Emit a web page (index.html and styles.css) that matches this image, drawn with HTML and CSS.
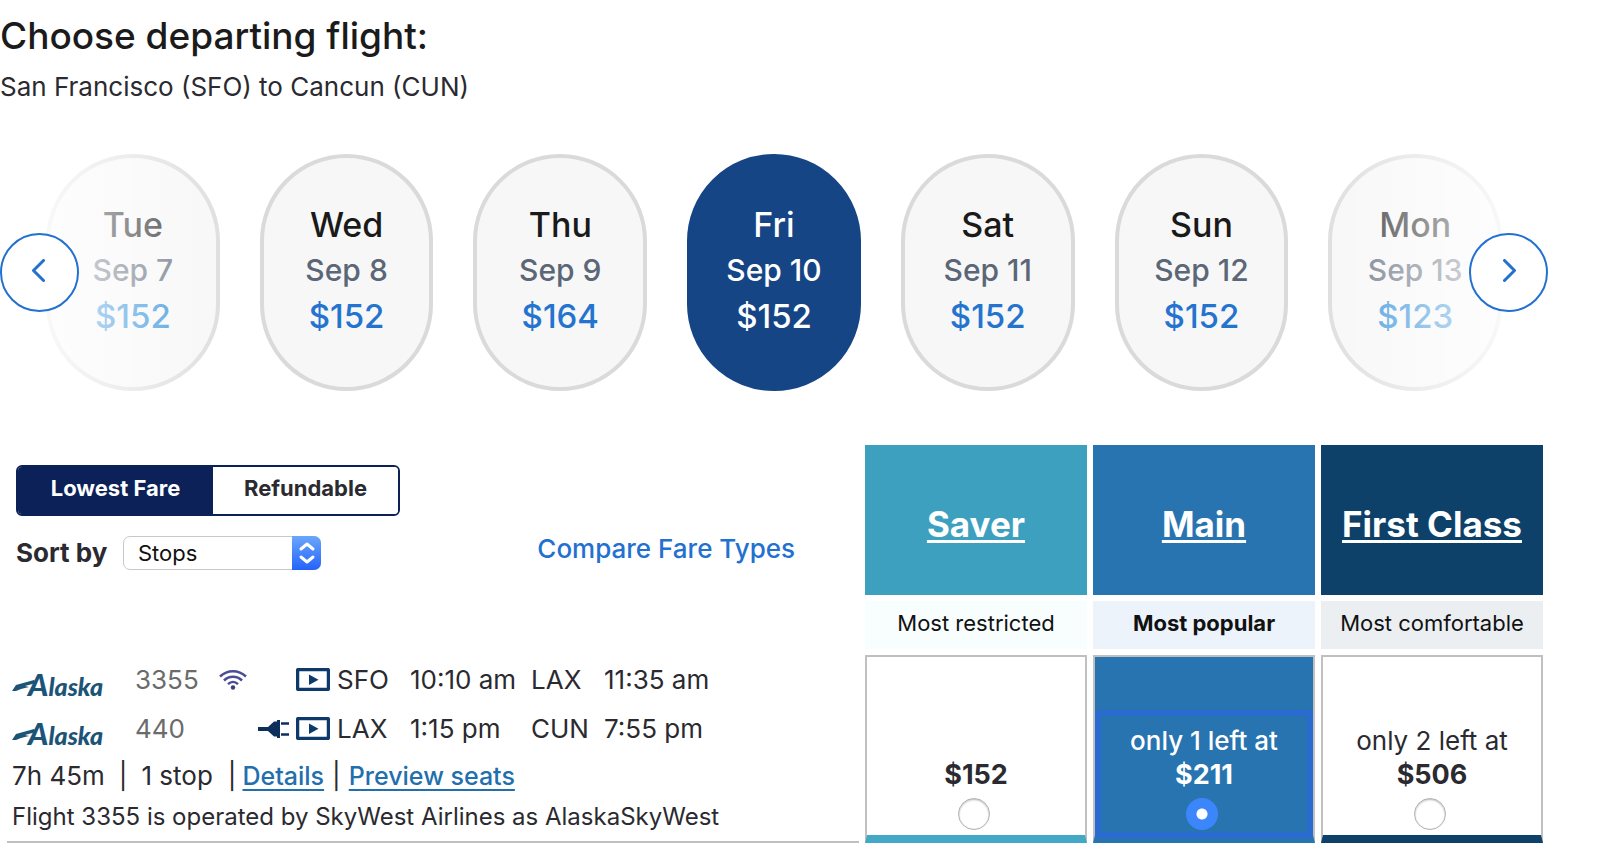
FILE: index.html
```
<!DOCTYPE html>
<html lang="en">
<head>
<meta charset="utf-8">
<meta name="viewport" content="width=device-width, initial-scale=1">
<title>Choose departing flight</title>
<link rel="stylesheet" href="styles.css">
</head>
<body>
<svg class="defs" aria-hidden="true">
  <symbol id="play" viewBox="0 0 34 23"><rect x="1.5" y="1.5" width="31" height="20" rx="1.5" fill="none" stroke="#0e3a6b" stroke-width="3.500"/><path d="M13 6.500v10.500l9.500-5.200z" fill="#0e3a6b"/></symbol>
  <symbol id="plug" viewBox="0 0 34 20"><path d="M1 8h10l6-5.500h3V1h3v18h-3v-1.500h-3L11 12H1z" fill="#0d2f5c"/><path d="M24 4.500h8M24 15.500h8" stroke="#0d2f5c" stroke-width="2.500" fill="none"/></symbol>
  <symbol id="wifi" viewBox="0 0 28 20"><g fill="none" stroke="#4c4c94" stroke-width="2.500"><path d="M1 6.500c7.500-7 18.500-7 26 0"/><path d="M5 10.500c5-5 13-5 18 0"/><path d="M9 14.200c3-3 7-3 10 0"/></g><circle cx="14" cy="17.500" r="2.200" fill="#3c3c86"/></symbol>
  <symbol id="logo-tail" viewBox="0 0 24 14"><path d="M0 13l4-6 18-5 2 3-11 3 4 1-8 2-5 2z" fill="#1c5478"/></symbol>
</svg>
<main class="page">
  <header>
    <h1 class="title">Choose departing flight:</h1>
    <p class="route">San Francisco (SFO) to Cancun (CUN)</p>
  </header>

  <nav class="dates" aria-label="Departure date">
    <div class="date-list">
      <button class="date"><span class="day">Tue</span><span class="md">Sep 7</span><span class="price">$152</span></button>
      <button class="date"><span class="day">Wed</span><span class="md">Sep 8</span><span class="price">$152</span></button>
      <button class="date"><span class="day">Thu</span><span class="md">Sep 9</span><span class="price">$164</span></button>
      <button class="date selected"><span class="day">Fri</span><span class="md">Sep 10</span><span class="price">$152</span></button>
      <button class="date"><span class="day">Sat</span><span class="md">Sep 11</span><span class="price">$152</span></button>
      <button class="date"><span class="day">Sun</span><span class="md">Sep 12</span><span class="price">$152</span></button>
      <button class="date"><span class="day">Mon</span><span class="md">Sep 13</span><span class="price">$123</span></button>
    </div>
    <button class="arrow prev" aria-label="Earlier dates"><svg width="13" height="23" viewBox="0 0 13 23"><path d="M11.500 1.500L1.500 11.500l10 10"/></svg></button>
    <button class="arrow next" aria-label="Later dates"><svg width="13" height="23" viewBox="0 0 13 23"><path d="M1.500 1.500l10 10-10 10"/></svg></button>
  </nav>

  <section class="results">
    <div class="filters">
      <div class="toggle">
        <button class="toggle-btn on">Lowest Fare</button>
        <button class="toggle-btn">Refundable</button>
      </div>
      <div class="sort-row">
        <label class="sort-label" for="sort">Sort by</label>
        <span class="select-wrap">
          <select id="sort" class="select"><option>Stops</option><option>Price</option></select>
          <svg class="select-arrows" viewBox="0 0 29 34" aria-hidden="true"><path d="M9 13l6-5 6 5M9 21l6 5 6-5"/></svg>
        </span>
        <a class="compare" href="#">Compare Fare Types</a>
      </div>
    </div>

    <div class="fare-head">
      <a class="fare-name saver" href="#">Saver</a>
      <p class="fare-note saver-note">Most restricted</p>
    </div>
    <div class="fare-head">
      <a class="fare-name main" href="#">Main</a>
      <p class="fare-note main-note">Most popular</p>
    </div>
    <div class="fare-head">
      <a class="fare-name first" href="#">First Class</a>
      <p class="fare-note first-note">Most comfortable</p>
    </div>

    <article class="flight">
      <table class="legs">
        <tr>
          <td class="c-logo"><span class="logo"><svg><use href="#logo-tail"/></svg><span class="word">Alaska</span></span></td>
          <td class="c-num">3355</td>
          <td class="c-wifi"><svg><use href="#wifi"/></svg></td>
          <td class="c-plug"></td>
          <td class="c-play"><svg><use href="#play"/></svg></td>
          <td class="c-from">SFO</td><td class="c-dep">10:10 am</td><td class="c-to">LAX</td><td>11:35 am</td>
        </tr>
        <tr>
          <td class="c-logo"><span class="logo"><svg><use href="#logo-tail"/></svg><span class="word">Alaska</span></span></td>
          <td class="c-num">440</td>
          <td class="c-wifi"></td>
          <td class="c-plug"><svg><use href="#plug"/></svg></td>
          <td class="c-play"><svg><use href="#play"/></svg></td>
          <td class="c-from">LAX</td><td class="c-dep">1:15 pm</td><td class="c-to">CUN</td><td>7:55 pm</td>
        </tr>
      </table>
      <p class="summary"><span>7h 45m</span><span class="wide">|</span><span>1 stop</span><span class="bar">|</span><a href="#">Details</a><span class="thin">|</span><a href="#">Preview seats</a></p>
      <p class="operated">Flight 3355 is operated by SkyWest Airlines as AlaskaSkyWest</p>
    </article>

    <label class="fare fare-saver"><span class="fare-body"><span class="amount">$152</span><input type="radio" name="fare"></span></label>
    <label class="fare fare-main"><span class="fare-body focus"><span>only 1 left at</span><span class="amount">$211</span><input type="radio" name="fare" checked></span></label>
    <label class="fare fare-first"><span class="fare-body"><span>only 2 left at</span><span class="amount">$506</span><input type="radio" name="fare"></span></label>
  </section>
</main>
</body>
</html>
```
FILE: styles.css
```
* { box-sizing: border-box; }
body { margin: 0; background: #fff; color: #2a2a30; font-family: Inter, "Liberation Sans", sans-serif; font-size: 26px; line-height: 32px; }
button, select, input { font: inherit; color: inherit; margin: 0; padding: 0; }
h1, p { margin: 0; }
.defs { position: absolute; width: 0; height: 0; }
.page { padding: 12px 57px 0 0; }
.title { font-size: 37px; line-height: 48px; font-weight: 500; color: #1b1b1b; }
.route { font-size: 26px; line-height: 36px; margin-top: 9px; }

/* date carousel */
.dates { position: relative; margin: 49px -5px 0 0; }
.dates::before, .dates::after { content: ""; position: absolute; top: 0; bottom: 0; width: 237px; z-index: 1; pointer-events: none; }
.dates::before { left: 0; background: linear-gradient(to right, #fff, rgba(255,255,255,0)); }
.dates::after { right: 0; background: linear-gradient(to left, #fff, rgba(255,255,255,0)); }
.date-list { display: flex; gap: 40px; padding: 0 46px; }
.date { flex: 1; height: 237px; border: 4px solid #dadada; border-radius: 87px; background: #f7f7f7; display: flex; flex-direction: column; align-items: center; justify-content: center; font-weight: 500; white-space: nowrap; padding-bottom: 3px; }
.day { font-size: 34px; line-height: 46px; color: #1a1a1a; }
.md { font-size: 30px; line-height: 44px; color: #5b6777; }
.price { font-size: 33px; line-height: 48px; color: #2474cf; }
.date:first-child .price, .date:last-child .price { color: #2288d8; }
.date:first-child, .date:last-child { opacity: 0.9; }
.selected { background: #154585; border-color: #154585; }
.selected span { color: #fff; }
.arrow { position: absolute; top: 79px; z-index: 2; width: 79px; height: 79px; border: 2px solid #2270d0; border-radius: 50%; background: #fff; display: flex; align-items: center; justify-content: center; padding-bottom: 4px; }
.arrow svg { fill: none; stroke: #2270d0; stroke-width: 3; stroke-linecap: round; stroke-linejoin: round; }
.prev { left: 0; padding-right: 2px; }
.next { right: 0; padding-left: 2px; }

/* fares */
.results { display: grid; grid-template-columns: minmax(0, 1fr) repeat(3, 222px); column-gap: 6px; row-gap: 6px; margin-top: 54px; }
.filters { padding: 20px 64px 0 16px; }
.toggle { display: inline-flex; width: 384px; height: 51px; border: 2px solid #0b2157; border-radius: 6px; overflow: hidden; vertical-align: top; }
.toggle-btn { border: 0; background: #fff; flex: 1; font-size: 22px; font-weight: 700; padding-bottom: 6px; }
.on { background: #0b2157; color: #fff; flex: 0 0 195px; }
.sort-row { display: flex; align-items: center; margin-top: 17px; }
.sort-label { font-size: 26px; font-weight: 700; width: 107px; white-space: nowrap; }
.select-wrap { position: relative; width: 198px; height: 34px; }
.select { appearance: none; width: 100%; height: 34px; border: 1px solid #c8c8c8; border-radius: 7px; background: #fff; color: #111; font-size: 22px; padding-left: 14px; }
.select-arrows { position: absolute; right: 0; top: 0; width: 29px; height: 34px; border-radius: 0 7px 7px 0; background: linear-gradient(#6aa7fb, #2463fb); fill: none; stroke: #fff; stroke-width: 3; stroke-linecap: round; stroke-linejoin: round; pointer-events: none; }
.compare { margin-left: auto; padding-bottom: 8px; font-size: 26px; font-weight: 500; color: #2270d0; text-decoration: none; }
.fare-head { display: grid; grid-template-rows: 150px 48px; row-gap: 6px; text-align: center; }
.fare-name { display: flex; align-items: center; justify-content: center; padding-top: 8px; color: #fff; font-size: 35px; font-weight: 700; text-decoration: underline; text-decoration-thickness: 3px; text-underline-offset: 3px; }
.fare-note { font-size: 22px; line-height: 44px; color: #111; }
.saver { background: #3ea0bf; }
.main { background: #2874b0; }
.first { background: #0e4169; }
.saver-note { background: #f8fdfe; }
.main-note { background: #edf3fb; font-weight: 700; }
.first-note { background: #ebeff2; }

.flight { margin-left: 7px; padding: 0 0 0 5px; border-bottom: 2px solid #c0c0c0; white-space: nowrap; display: flex; flex-direction: column; }
.legs { border-collapse: collapse; font-size: 26px; table-layout: fixed; width: 720px; }
.legs td { padding: 0; height: 49px; line-height: 49px; }
.legs svg { display: block; }
.c-logo { width: 123px; }
.legs .c-num { width: 84px; color: #6b6b6b; }
.c-wifi { width: 38px; }
.c-plug { width: 39px; }
.c-play { width: 41px; }
.c-from { width: 73px; }
.c-dep { width: 121px; }
.c-to { width: 73px; }
.c-wifi svg { width: 28px; height: 20px; }
.c-plug svg { width: 34px; height: 20px; }
.c-play svg { width: 34px; height: 23px; }
.logo { display: flex; align-items: center; color: #1c5478; font-family: Lato, "Liberation Sans", sans-serif; font-size: 25px; font-style: italic; font-weight: 900; line-height: 30px; padding-top: 10px; }
.logo svg { width: 24px; height: 14px; margin-right: -8px; }
.word::first-letter { font-size: 31px; }
.summary { display: flex; line-height: 48px; margin-top: -1px; }
.wide { margin: 0 14px; }
.bar { margin: 0 6px 0 15px; }
.thin { margin: 0 8px; }
.summary a { color: #226fae; font-size: 25px; font-weight: 500; text-underline-offset: 4px; text-decoration-thickness: 2px; }
.operated { font-size: 24px; line-height: 34px; padding-bottom: 6px; }

.fare { display: flex; align-items: flex-end; border: 2px solid #c0c0c0; border-bottom-width: 8px; height: 188px; text-align: center; }
.fare-body { flex: 1; display: flex; flex-direction: column; align-items: center; line-height: 34px; padding-bottom: 5px; }
.amount { font-size: 27px; font-weight: 700; }
.fare-saver { border-bottom-color: #43a8c5; }
.fare-main { border-bottom-color: #2874b0; background: #2874b0; color: #fff; }
.fare-first { border-bottom-color: #0e4169; }
.focus { border: 6px solid #2a6bd0; border-radius: 4px; padding: 8px 0 2px; margin-bottom: -3px; }
.focus span:first-child { font-weight: 500; }
.fare input { appearance: none; width: 32px; height: 32px; margin-top: 6px; margin-right: 4px; border-radius: 50%; border: 1px solid #b0b0b0; background: #fff; box-shadow: inset 0 1px 2px #bbb; }
.fare input:checked { border: 0; background: radial-gradient(circle, #fff 5px, #3b86fb 6px); box-shadow: none; }
```
